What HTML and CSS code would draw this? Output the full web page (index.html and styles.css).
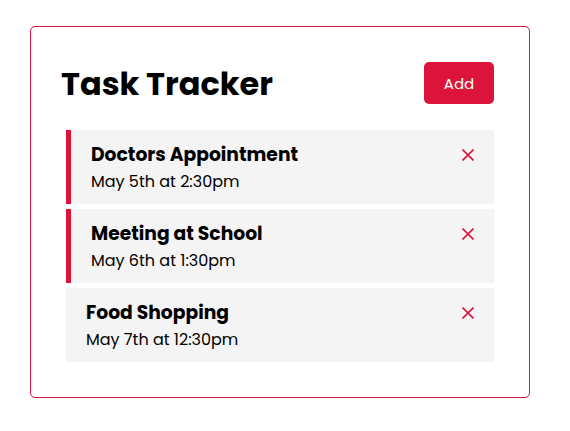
FILE: index.html
```
<!DOCTYPE html>
<html lang="en">
<head>
<meta charset="utf-8">
<title>Task Tracker</title>
<link rel="stylesheet" href="styles.css">
</head>
<body>
<div class="container">
  <header class="header">
    <h1 class="title">Task Tracker</h1>
    <button class="btn">Add</button>
  </header>
  <div class="task reminder">
    <h3 class="task-title">Doctors Appointment
      <svg class="del" width="12" height="12" viewBox="0 0 12 12"><path d="M0.5 0.5 L11.5 11.5 M11.5 0.5 L0.5 11.5"/></svg>
    </h3>
    <p class="task-day">May 5th at 2:30pm</p>
  </div>
  <div class="task reminder">
    <h3 class="task-title">Meeting at School
      <svg class="del" width="12" height="12" viewBox="0 0 12 12"><path d="M0.5 0.5 L11.5 11.5 M11.5 0.5 L0.5 11.5"/></svg>
    </h3>
    <p class="task-day">May 6th at 1:30pm</p>
  </div>
  <div class="task">
    <h3 class="task-title">Food Shopping
      <svg class="del" width="12" height="12" viewBox="0 0 12 12"><path d="M0.5 0.5 L11.5 11.5 M11.5 0.5 L0.5 11.5"/></svg>
    </h3>
    <p class="task-day">May 7th at 12:30pm</p>
  </div>
</div>
</body>
</html>
```
FILE: styles.css
```
* { box-sizing: border-box; }
body {
  margin: 0;
  font-family: "Poppins", Inter, "Noto Sans", sans-serif;
  background: #fff;
  color: #000;
}
.container {
  width: 500px;
  margin: 26px 0 0 30px;
  padding: 30px;
  border: 1px solid #dc143c;
  border-radius: 5px;
}
.header {
  display: flex;
  justify-content: space-between;
  align-items: center;
  height: 52px;
  margin-bottom: 21px;
}
.title {
  margin: 0;
  font-size: 32px;
  font-weight: 700;
  line-height: 48px;
  padding-top: 2px;
}
.btn {
  background: #dc143c;
  color: #fff;
  border: none;
  border-radius: 5px;
  margin: 5px;
  width: 70px;
  height: 42px;
  font-family: inherit;
  font-size: 15px;
}
.task {
  background: #f4f4f4;
  margin: 5px;
  padding: 11px 20px 9px;
  height: 74px;
}
.task.reminder {
  border-left: 5px solid #dc143c;
}
.task-title {
  margin: 0;
  display: flex;
  justify-content: space-between;
  align-items: center;
  font-size: 18.72px;
  font-weight: 700;
  line-height: 27px;
}
.del {
  stroke: #dc143c;
  stroke-width: 1.6;
  fill: none;
}
.task-day {
  margin: 0;
  font-size: 16px;
  line-height: 27px;
}
```
